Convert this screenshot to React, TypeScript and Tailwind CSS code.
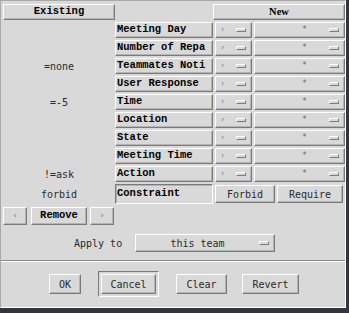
import React from "react";

const raised =
  "border border-t-white border-l-white border-b-[#7a7a7a] border-r-[#7a7a7a] shadow-[inset_-1px_-1px_0_0_#b4b4b4]";
const sunken =
  "border border-t-[#7a7a7a] border-l-[#7a7a7a] border-b-white border-r-white shadow-[inset_1px_1px_0_0_#b4b4b4]";

const bold = "font-['Liberation_Mono',monospace] font-bold text-[10.5px] text-black";
const reg = "font-['DejaVu_Sans_Mono',monospace] text-[10px] text-[#2a2a2a]";

function Bar() {
  return <div className={`w-[10px] h-[4px] ${raised} shadow-none`} />;
}

function Row({ left, label }: { left?: string; label: string }) {
  return (
    <div className="flex h-[16px]">
      <div className={`w-[112px] flex items-center justify-center ${reg}`}>{left}</div>
      <div className={`w-[98px] ${raised} flex items-center pl-[1px] overflow-hidden whitespace-nowrap ${bold}`}>
        {label}
      </div>
      <div className={`ml-[2px] w-[37px] ${raised} flex items-center pl-[5px] pr-[5px] justify-between`}>
        <span className="font-['DejaVu_Sans',sans-serif] text-[8px] text-[#777] leading-none">›</span>
        <Bar />
      </div>
      <div className={`ml-[2px] w-[91px] ${raised} relative flex items-center justify-end pr-[5px]`}>
        <span className="absolute left-[30px] right-[20px] text-center font-['DejaVu_Sans',sans-serif] text-[8px] text-[#666] leading-none">
          *
        </span>
        <Bar />
      </div>
    </div>
  );
}

export default function App() {
  const rows: { left?: string; label: string }[] = [
    { label: "Meeting Day" },
    { label: "Number of Repa" },
    { left: "=none", label: "Teammates Noti" },
    { label: "User Response" },
    { left: "=-5", label: "Time" },
    { label: "Location" },
    { label: "State" },
    { label: "Meeting Time" },
    { left: "!=ask", label: "Action" },
  ];
  return (
    <div className="w-[349px] h-[313px] bg-[#34343e] overflow-hidden">
      <div className="w-[346px] h-[308px] bg-[#d9d9d9] border-t border-l border-t-[#a8a8a8] border-l-[#a8a8a8] border-r border-b border-r-white border-b-white flex flex-col">
        <div className="pl-[2px] pt-[3px]">
          <div className="flex h-[16px]">
            <div className={`w-[112px] ${raised} flex items-center justify-center ${bold}`}>Existing</div>
            <div className="w-[98px]" />
            <div className={`w-[132px] ${raised} flex items-center justify-center ${bold} font-['Liberation_Serif',serif]`}>
              New
            </div>
          </div>
          <div className="mt-[2px] flex flex-col gap-[2px]">
            {rows.map((r) => (
              <Row key={r.label} left={r.left} label={r.label} />
            ))}
            <div className="flex h-[20px]">
              <div className={`w-[112px] flex items-center justify-center ${reg}`}>forbid</div>
              <div className={`w-[98px] ${sunken} flex items-center pl-[1px] ${bold}`}>Constraint</div>
              <div className={`ml-[2px] mt-[1px] w-[60px] h-[18px] ${raised} flex items-center justify-center ${reg}`}>
                Forbid
              </div>
              <div className={`ml-[2px] mt-[1px] w-[66px] h-[18px] ${raised} flex items-center justify-center ${reg}`}>
                Require
              </div>
            </div>
          </div>
          <div className="mt-[3px] flex h-[18px]">
            <div className={`w-[24px] ${raised} flex items-center justify-center font-['DejaVu_Sans',sans-serif] text-[9px] text-[#777]`}>
              ‹
            </div>
            <div className={`ml-[4px] w-[56px] ${raised} flex items-center justify-center ${bold}`}>Remove</div>
            <div className={`ml-[3px] w-[24px] ${raised} flex items-center justify-center font-['DejaVu_Sans',sans-serif] text-[9px] text-[#777]`}>
              ›
            </div>
          </div>
          <div className="mt-[9px] flex h-[18px] items-center">
            <div className={`ml-[71px] w-[52px] ${reg}`}>Apply to</div>
            <div className={`ml-[9px] w-[140px] h-[18px] ${raised} flex items-center pr-[5px]`}>
              <span className={`flex-1 text-center ${reg}`}>this team</span>
              <Bar />
            </div>
          </div>
        </div>
        <div className="mt-[8px] h-[2px] border-t border-t-[#8a8a8a] border-b border-b-white" />
        <div className="mt-[9px] flex items-center h-[26px]">
          <div className={`ml-[48px] w-[32px] h-[20px] ${raised} flex items-center justify-center ${reg}`}>OK</div>
          <div className={`ml-[17px] w-[61px] h-[26px] ${sunken} shadow-none p-[2px]`}>
            <div className={`w-full h-full ${raised} flex items-center justify-center ${reg}`}>Cancel</div>
          </div>
          <div className={`ml-[17px] w-[51px] h-[20px] ${raised} flex items-center justify-center ${reg}`}>Clear</div>
          <div className={`ml-[15px] w-[57px] h-[20px] ${raised} flex items-center justify-center ${reg}`}>Revert</div>
        </div>
      </div>
    </div>
  );
}
